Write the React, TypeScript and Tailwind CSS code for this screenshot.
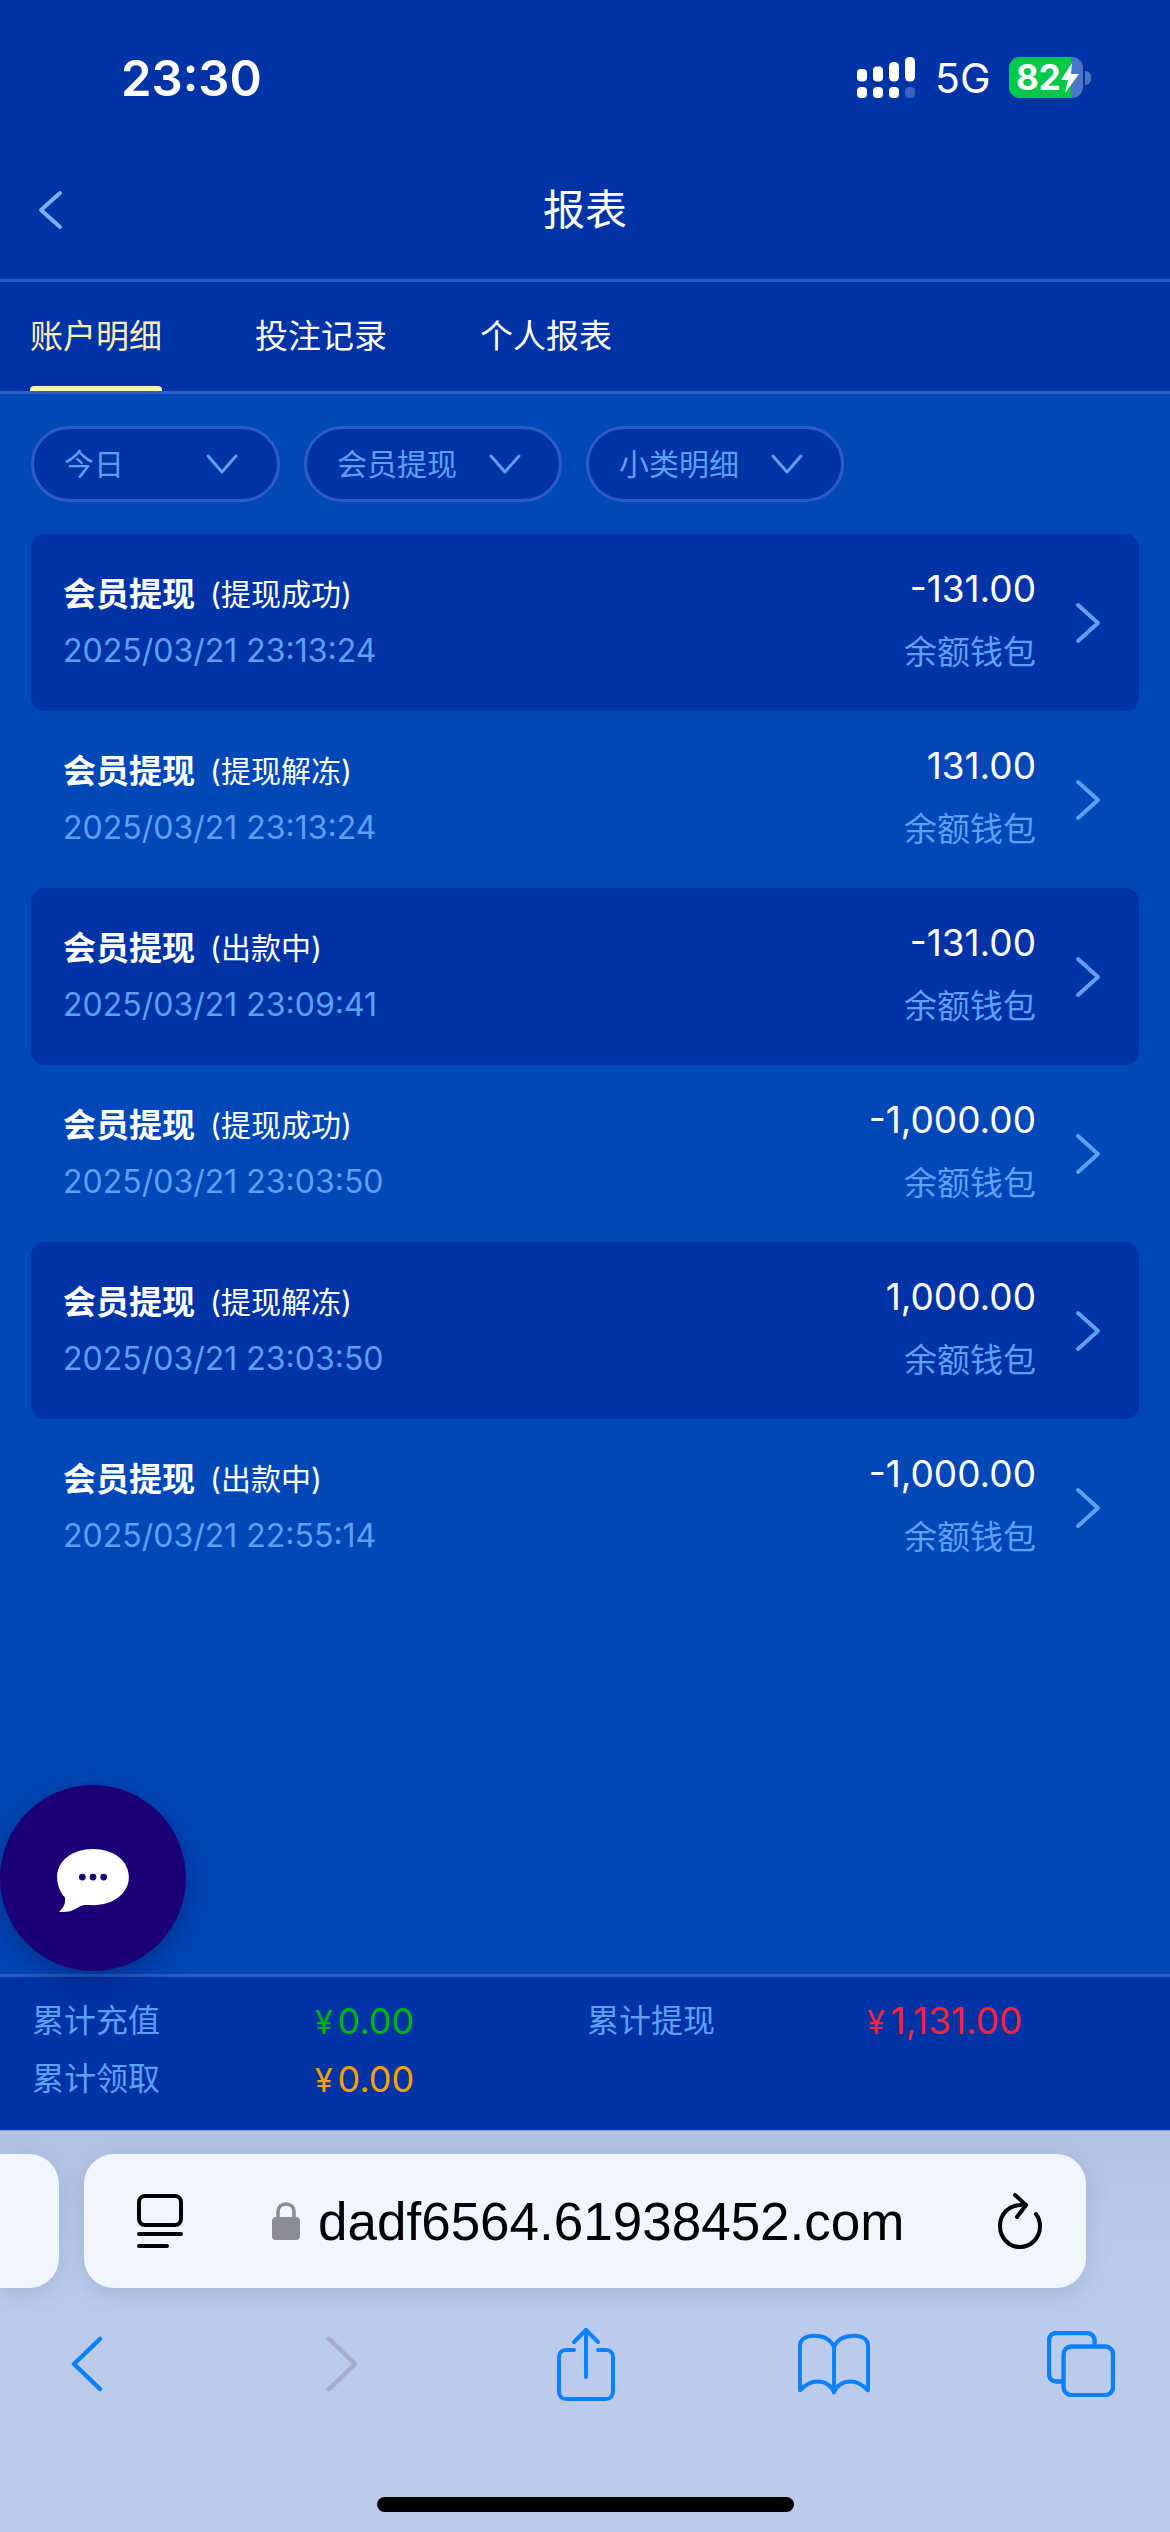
import React from "react";

const rows = [
  ["(提现成功)", "2025/03/21 23:13:24", "-131.00", true],
  ["(提现解冻)", "2025/03/21 23:13:24", "131.00", false],
  ["(出款中)", "2025/03/21 23:09:41", "-131.00", true],
  ["(提现成功)", "2025/03/21 23:03:50", "-1,000.00", false],
  ["(提现解冻)", "2025/03/21 23:03:50", "1,000.00", true],
  ["(出款中)", "2025/03/21 22:55:14", "-1,000.00", false],
] as const;

const Down = () => (
  <svg width="32" height="22" viewBox="0 0 32 22" fill="none" stroke="#5fa0f7" strokeWidth="3" strokeLinecap="round" strokeLinejoin="round">
    <path d="M2 3 L16 19 L30 3" />
  </svg>
);

const Pill = ({ w, label, gap }: { w: string; label: string; gap: string }) => (
  <div className={`${w} h-[76px] flex items-center rounded-full border-[3px] border-[#2d5cc6] bg-[#0033a6] pl-[30px] text-[30px] text-[#5fa0f7]`}>
    <span className={gap}>{label}</span>
    <Down />
  </div>
);

export default function App() {
  return (
    <div className="relative w-[1170px] h-[2532px] flex flex-col overflow-hidden bg-[#0047b8] text-white font-['Inter','Noto_Sans_CJK_SC',sans-serif]">
      <div className="bg-[#0033a6]">
        <div className="h-[141px] flex justify-between items-start pl-[121px] pr-[79px] pt-[51px]">
          <div className="text-[49px] leading-[56px] font-semibold">23:30</div>
          <div className="flex items-center h-[41px] mt-[6px]">
            <svg width="58" height="41" viewBox="0 0 58 41" fill="white">
              <rect x="0" y="12" width="10" height="12.5" rx="4" />
              <rect x="16" y="9.5" width="10" height="15" rx="4" />
              <rect x="32" y="5" width="10" height="19.5" rx="4.5" />
              <rect x="48" y="0" width="10" height="24.5" rx="4.5" />
              <rect x="0" y="30" width="10" height="11" rx="4" />
              <rect x="16" y="30" width="10" height="11" rx="4" />
              <rect x="32" y="30" width="10" height="11" rx="4" />
              <rect x="48" y="30" width="10" height="11" rx="4" fill="#3a62c2" />
            </svg>
            <span className="ml-[20px] text-[41px] leading-[41px] w-[54px] translate-y-[1px]">5G</span>
            <div className="relative ml-[20px] w-[74px] h-[41px] rounded-[11px] overflow-hidden bg-[#4d75c8]">
              <div className="w-[62px] h-full bg-[#00c84a]" />
              <div className="absolute left-[7px] top-0 h-full flex items-center text-[35px] font-bold leading-none">82</div>
              <svg className="absolute left-[52px] top-[6px]" width="18" height="30" viewBox="0 0 18 30" fill="white">
                <path d="M11 0 L0 17 H7 L4 30 L18 11 H10 Z" />
              </svg>
            </div>
            <div className="ml-[2px] w-[6px] h-[14px] rounded-r-full bg-[#4d75c8]" />
          </div>
        </div>
        <div className="relative h-[141px] flex items-center justify-center border-b-[3px] border-[#2d5cc6]">
          <svg className="absolute left-[36px] top-[49px]" width="28" height="40" viewBox="0 0 28 40" fill="none" stroke="#7db0f7" strokeWidth="4" strokeLinecap="round" strokeLinejoin="round">
            <path d="M24 3 L5 20 L24 37" />
          </svg>
          <div className="text-[42px] leading-none">报表</div>
        </div>
        <div className="h-[112px] flex pl-[30px] gap-[93px] border-b-[3px] border-[#2d5cc6] text-[33px]">
          <div className="relative w-[132px] flex items-center text-[#fdeeb5]">
            账户明细
            <div className="absolute left-0 right-0 bottom-0 h-[5px] rounded-t bg-[#fdeeb5]" />
          </div>
          <div className="w-[132px] flex items-center">投注记录</div>
          <div className="w-[132px] flex items-center">个人报表</div>
        </div>
      </div>

      <div className="flex-1 px-[31px] pt-[32px]">
        <div className="flex gap-[24px]">
          <Pill w="w-[249px]" label="今日" gap="w-[142px]" />
          <Pill w="w-[258px]" label="会员提现" gap="w-[152px]" />
          <Pill w="w-[258px]" label="小类明细" gap="w-[152px]" />
        </div>
        <div className="mt-[32px]">
          {rows.map(([sub, date, amount, dark], i) => (
            <div key={i} className={`h-[177px] flex items-center rounded-[14px] pl-[32px] pr-[38px] ${dark ? "bg-[#0033a6]" : ""}`}>
              <div className="flex-1">
                <div className="flex items-center h-[40px] mb-[17px]">
                  <span className="text-[33px] font-bold leading-none">会员提现</span>
                  <span className="ml-[15px] text-[30px] leading-none">{sub}</span>
                </div>
                <div className="text-[32px] leading-[40px] text-[#5fa0f7]">{date}</div>
              </div>
              <div className="text-right mr-[39px] -mt-[10px]">
                <div className="text-[37px] leading-[44px] mb-[18px]">{amount}</div>
                <div className="text-[33px] leading-[40px] text-[#5fa0f7] translate-y-[3px]">余额钱包</div>
              </div>
              <svg width="26" height="42" viewBox="0 0 26 42" fill="none" stroke="#5fa0f7" strokeWidth="4" strokeLinecap="round" strokeLinejoin="round">
                <path d="M3 3 L23 21 L3 39" />
              </svg>
            </div>
          ))}
        </div>
      </div>

      <div className="absolute left-0 top-[1785px] w-[186px] h-[186px] rounded-full bg-[#1c0078] shadow-[0_8px_30px_rgba(0,20,80,0.45)] flex items-center justify-center pt-[5px]">
        <svg width="72" height="64" viewBox="0 0 74 66" fill="white">
          <path d="M37 0 C58 0 74 12 74 29 C74 46 58 58 37 58 C31 58 27 57 22 60 C15 65 8 65 2 65 C7 60 9 56 8 50 C3 45 0 37 0 29 C0 12 16 0 37 0 Z" />
          <circle cx="26" cy="29" r="3.5" fill="#1c0078" />
          <circle cx="37" cy="29" r="3.5" fill="#1c0078" />
          <circle cx="48" cy="29" r="3.5" fill="#1c0078" />
        </svg>
      </div>

      <div className="h-[156px] bg-[#0033a6] border-t-[3px] border-[#2d5cc6] pt-[16px] pl-[32px] text-[32px] leading-[56px] grid grid-cols-[283px_272px_280px_1fr] content-start">
        <div className="text-[#5fa0f7]">累计充值</div>
        <div className="text-[#00b30c] text-[36px]"><span className="text-[32px] mr-[5px]">¥</span>0.00</div>
        <div className="text-[#5fa0f7]">累计提现</div>
        <div className="text-[#f5243f] text-[37px]"><span className="text-[32px] mr-[6px]">¥</span>1,131.00</div>
        <div className="text-[#5fa0f7]">累计领取</div>
        <div className="text-[#f7a100] text-[36px]"><span className="text-[32px] mr-[5px]">¥</span>0.00</div>
      </div>

      <div className="h-[402px] bg-gradient-to-b from-[#b3c2e2] to-[#bccbeb] to-[30%] border-t border-[#8f9fc4] pt-[23px]">
        <div className="flex h-[134px]">
          <div className="w-[59px] rounded-r-[30px] bg-[#f1f6fe] shadow-[0_6px_24px_rgba(70,90,140,0.2)]" />
          <div className="ml-[25px] w-[1002px] rounded-[30px] bg-[#f1f6fe] shadow-[0_6px_24px_rgba(70,90,140,0.2)] flex items-center pl-[53px]">
            <svg width="46" height="54" viewBox="0 0 46 54" fill="none" stroke="#000" strokeWidth="4" strokeLinecap="round">
              <rect x="2" y="2" width="42" height="29" rx="6" />
              <path d="M2 40 H44" />
              <path d="M2 52 H30" />
            </svg>
            <svg className="ml-[89px]" width="28" height="38" viewBox="0 0 28 38" fill="#8c8c94">
              <rect x="0" y="15" width="28" height="23" rx="4" />
              <path d="M6 16 V10 C6 5 9 2 14 2 C19 2 22 5 22 10 V16" fill="none" stroke="#8c8c94" strokeWidth="3.5" />
            </svg>
            <span className="ml-[18px] w-[590px] shrink-0 text-[53px] leading-none text-black font-['Liberation_Sans',sans-serif]">dadf6564.61938452.com</span>
            <svg className="ml-[90px]" width="44" height="56" viewBox="0 0 44 56" fill="none" stroke="#000" strokeWidth="4" strokeLinecap="round" strokeLinejoin="round">
              <path d="M23 12 C11 12 2 21 2 33 C2 45 11 54 22 54 C33 54 42 45 42 33 C42 28 41 25 38 21" />
              <path d="M17 2 L28 12 L19 24" />
            </svg>
          </div>
        </div>
        <div className="flex items-center h-[76px] mt-[38px] pl-[70px]">
          <svg width="34" height="56" viewBox="0 0 34 56" fill="none" stroke="#0a80fc" strokeWidth="4.5" strokeLinecap="round" strokeLinejoin="round">
            <path d="M30 3 L4 28 L30 53" />
          </svg>
          <svg className="ml-[221px]" width="34" height="56" viewBox="0 0 34 56" fill="none" stroke="#a3adc6" strokeWidth="4.5" strokeLinecap="round" strokeLinejoin="round">
            <path d="M4 3 L30 28 L4 53" />
          </svg>
          <svg className="ml-[198px]" width="58" height="74" viewBox="0 0 58 74" fill="none" stroke="#0a80fc" strokeWidth="4" strokeLinecap="round" strokeLinejoin="round">
            <path d="M17 23 H9 C5 23 2 26 2 30 V64 C2 69 5 72 9 72 H49 C53 72 56 69 56 64 V30 C56 26 53 23 49 23 H41" />
            <path d="M29 50 V3" />
            <path d="M17 15 L29 3 L41 15" />
          </svg>
          <svg className="ml-[183px]" width="72" height="62" viewBox="0 0 74 62" fill="none" stroke="#0a80fc" strokeWidth="4" strokeLinecap="round" strokeLinejoin="round">
            <path d="M37 14 C34 6 26 2 16 2 C8 2 2 6 2 12 V58 C8 52 14 49 20 49 C28 49 34 53 37 60 C40 53 46 49 54 49 C60 49 66 52 72 58 V12 C72 6 66 2 58 2 C48 2 40 6 37 14 Z" />
            <path d="M37 14 V60" />
          </svg>
          <svg className="ml-[177px]" width="68" height="66" viewBox="0 0 70 68" fill="none" stroke="#0a80fc" strokeWidth="4.5" strokeLinejoin="round">
            <path d="M17 52 H10 C5 52 2 49 2 44 V10 C2 5 5 2 10 2 H40 C45 2 49 5 49 10 V16" />
            <rect x="17" y="16" width="51" height="50" rx="8" />
          </svg>
        </div>
        <div className="mx-auto mt-[95px] w-[417px] h-[15px] rounded-full bg-black" />
      </div>
    </div>
  );
}
